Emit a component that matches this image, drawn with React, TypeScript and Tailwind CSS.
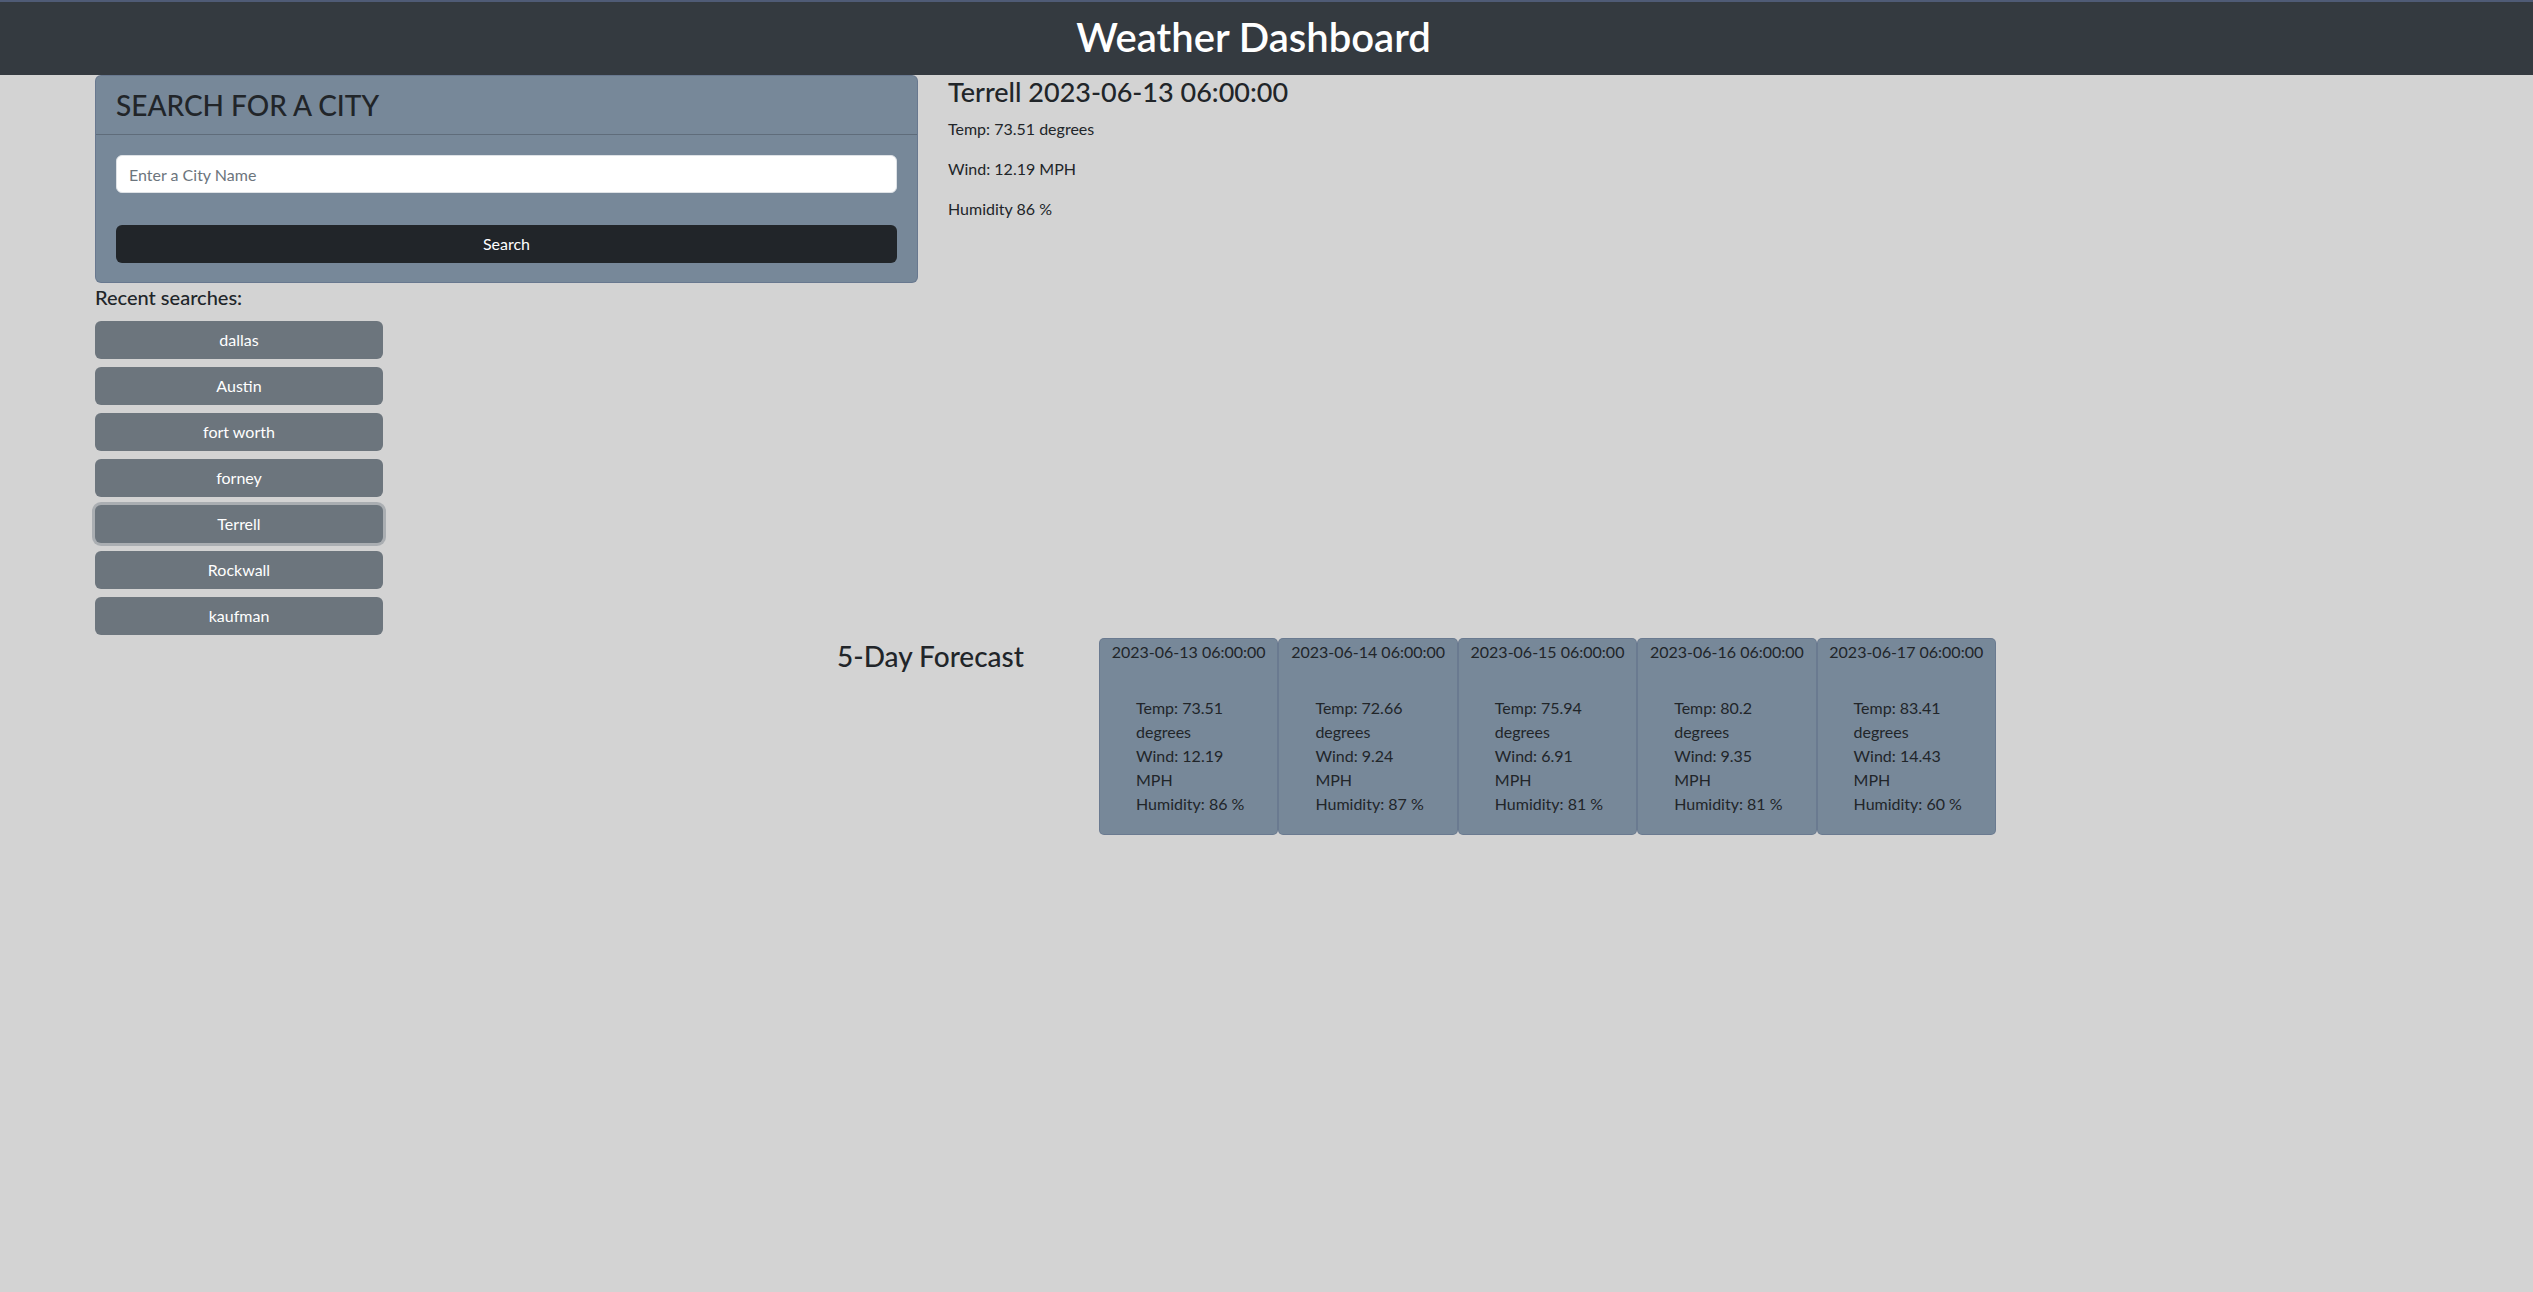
import React from 'react'

const recent = ['dallas', 'Austin', 'fort worth', 'forney', 'Terrell', 'Rockwall', 'kaufman']

const forecast = [
  { date: '2023-06-13 06:00:00', temp: '73.51', wind: '12.19', humidity: 86 },
  { date: '2023-06-14 06:00:00', temp: '72.66', wind: '9.24', humidity: 87 },
  { date: '2023-06-15 06:00:00', temp: '75.94', wind: '6.91', humidity: 81 },
  { date: '2023-06-16 06:00:00', temp: '80.2', wind: '9.35', humidity: 81 },
  { date: '2023-06-17 06:00:00', temp: '83.41', wind: '14.43', humidity: 60 },
]

function ForecastCard({ day }: { day: (typeof forecast)[number] }) {
  return (
    <div className="w-[179.4px] shrink-0 rounded-[5px] border border-[#62728a]/60 bg-[#778899] text-[#212529]">
      <p className="pt-[1px] text-center text-[16px] leading-6">{day.date}</p>
      <div className="mt-[32px] pb-[18px] pl-[36px] pr-[12px] text-[16px] leading-6">
        <p>
          Temp: {day.temp}
          <br />
          degrees
        </p>
        <p>
          Wind: {day.wind}
          <br />
          MPH
        </p>
        <p className="whitespace-nowrap">Humidity: {day.humidity} %</p>
      </div>
    </div>
  )
}

export default function App() {
  return (
    <div className="min-h-screen bg-[#d3d3d3] font-['Lato','Segoe_UI',sans-serif] text-[#212529]">
      <header className="flex h-[75px] items-center justify-center border-t-2 border-[#4f5b76] bg-[#343a40] pb-[4px] pr-[26px]">
        <h1 className="text-[40px] font-semibold leading-[1.2] text-white">Weather Dashboard</h1>
      </header>

      <main>
        <div className="flex pl-[95px]">
          {/* search + history */}
          <aside className="w-[823px] shrink-0">
            <section className="rounded-[6px] border border-[#62728a]/70 bg-[#778899]">
              <div className="flex h-[59px] items-center border-b border-black/20 px-[20px]">
                <h3 className="pt-[2px] text-[28px] font-medium uppercase leading-[1.2]">Search for a City</h3>
              </div>
              <div className="flex flex-col gap-[32px] px-[20px] pb-[19px] pt-[20px]">
                <input
                  type="text"
                  placeholder="Enter a City Name"
                  className="h-[38px] w-full rounded-[6px] border border-[#dee2e6] bg-white px-[12px] text-[16px] placeholder:text-[#6c757d] focus:outline-none"
                />
                <button className="h-[38px] w-full rounded-[6px] bg-[#212529] text-[16px] text-white">Search</button>
              </div>
            </section>
            <h5 className="mb-[12px] mt-[2px] text-[20px] font-medium leading-[1.2]">Recent searches:</h5>
            <div className="flex flex-col gap-[8px]">
              {recent.map((city) => (
                <button
                  key={city}
                  className={
                    city === 'Terrell'
                      ? 'h-[38px] w-[288px] rounded-[6px] bg-[#6c757d] text-[16px] text-white shadow-[0_0_0_3px_rgba(130,138,145,0.5)]'
                      : 'h-[38px] w-[288px] rounded-[6px] bg-[#6c757d] text-[16px] text-white'
                  }
                >
                  {city}
                </button>
              ))}
            </div>
          </aside>

          {/* current weather */}
          <section className="ml-[30px]">
            <h3 className="mb-[8px] text-[27px] font-medium leading-[1.25]">Terrell 2023-06-13 06:00:00</h3>
            <p className="mb-4 text-[16px] leading-6">Temp: 73.51 degrees</p>
            <p className="mb-4 text-[16px] leading-6">Wind: 12.19 MPH</p>
            <p className="mb-4 text-[16px] leading-6">Humidity 86 %</p>
          </section>
        </div>

        {/* 5 day forecast */}
        <div className="mt-[3px] flex items-start pl-[837px]">
          <h3 className="w-[262px] shrink-0 pt-[2px] text-[28px] font-medium leading-[1.2]">5-Day Forecast</h3>
          <div className="flex">
            {forecast.map((day) => (
              <ForecastCard key={day.date} day={day} />
            ))}
          </div>
        </div>
      </main>
    </div>
  )
}
